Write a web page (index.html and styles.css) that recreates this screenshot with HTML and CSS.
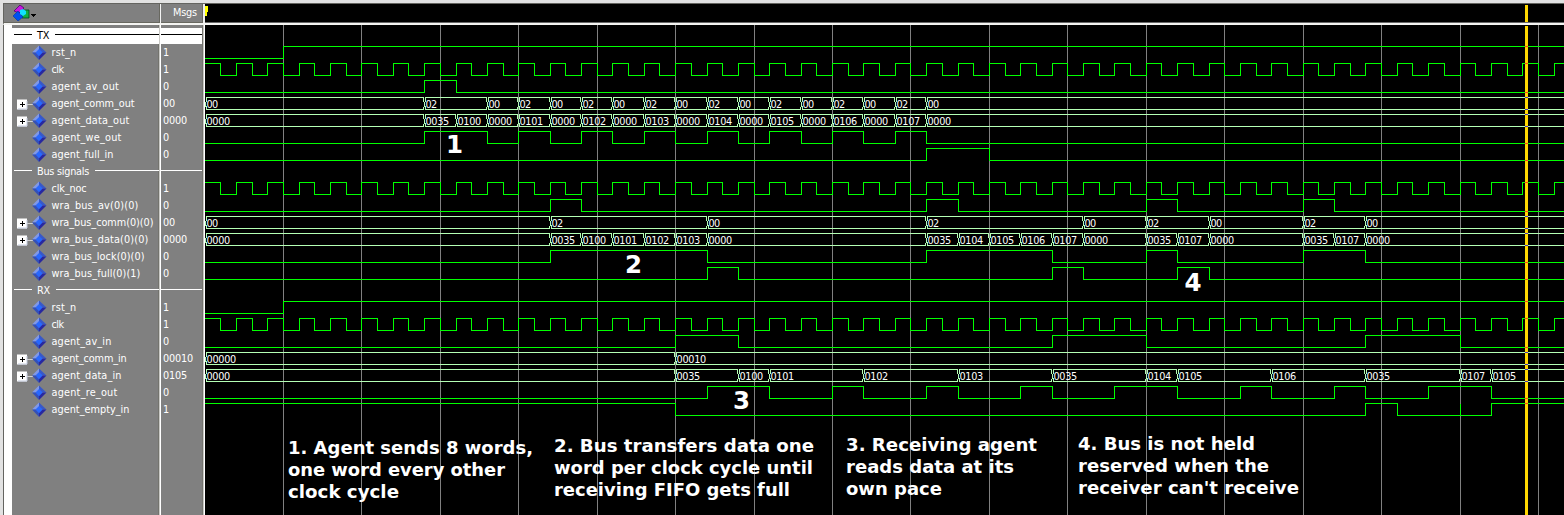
FILE: index.html
```
<!DOCTYPE html>
<html lang="en">
<head>
<meta charset="utf-8">
<title>Wave</title>
<link rel="stylesheet" href="styles.css">
</head>
<body>
<div class="window">
  <div class="header">
    <div class="header-names">
      <svg class="logo" width="26" height="18" viewBox="0 0 26 18">
        <path d="M8 5h8v8H9z" fill="#10b040" stroke="#004820" stroke-width=".8"/>
        <path d="M1 6L7 0l4 3-5 5z" fill="#c818e0" stroke="#500070" stroke-width=".8"/>
        <path d="M0 11l5-5 5 6-5 4z" fill="#0050f0" stroke="#0030a0" stroke-width=".6"/>
        <path d="M7 5l3-1 3 2v3l-3 2-3-2z" fill="#10e0ff"/>
        <path d="M18 9h5v1h-1v1h-1v1h-1v-1h-1v-1h-1z" fill="#000"/>
      </svg>
    </div>
    <div class="header-msgs"><span data-w="24">Msgs</span></div>
    <div class="ruler"><svg width="1359" height="18" shape-rendering="crispEdges">
      <path d="M0 2h3v6H2v4H0z" fill="#ff0"/><rect x="1320" y="1" width="3" height="17" fill="#ffd700"/>
    </svg></div>
  </div>
  <div class="body">
    <div class="names" id="names"></div>
    <div class="values" id="values"></div>
    <div class="waves"><svg id="waves" width="1359" height="490" viewBox="205 25 1359 490"></svg></div>
  </div>
</div>
<script src="wave.js"></script>
</body>
</html>
```
FILE: styles.css
```
* { box-sizing: border-box; }
body { margin: 0; overflow: hidden; background: #000; font-family: "DejaVu Sans Condensed", "DejaVu Sans", sans-serif; font-stretch: condensed; font-size: 10.8px; color: #fff; }
.window { width: 1564px; height: 515px; display: flex; flex-direction: column; border-left: 3px solid #e2e2e2; border-top: 3px solid #e2e2e2; }
.header { display: flex; flex: none; height: 22px; background: #808080; border-top: 1px solid #646460; border-left: 1px solid #646460; border-bottom: 2px solid #f4f4f2; }
.header-names { width: 157px; padding: 1px 0 0 9px; border-right: 1px solid #f4f4f4; box-shadow: inset -1px 0 #686860, inset 0 -1px #686860; }
.logo { display: block; }
.header-msgs { width: 44px; padding: 2px 0 0 12px; border-right: 2px solid #eee; box-shadow: inset -1px 0 #686860, inset 0 -1px #686860; line-height: 14px; white-space: nowrap; }
.ruler { flex: 1; background: #000; border-bottom: 1px solid #686868; }
.ruler svg { display: block; }
.body { display: flex; flex: 1; min-height: 0; border-left: 1px solid #646460; background: #808080; }
.names { width: 157px; padding-top: 2px; border-left: 8px solid #fff; border-right: 1px solid #fff; box-shadow: inset -1px 0 #c8c8c4, inset -2px 0 #74746e; }
.values { width: 44px; padding-top: 2px; border-right: 1px solid #fff; box-shadow: inset -1px 0 #c8c8c4, inset -2px 0 #74746e; }
.row { height: 17px; display: flex; align-items: center; line-height: 17px; white-space: nowrap; }
.names .row { padding-left: 5px; }
.values .row { padding-left: 2px; }
.row .tree { width: 30px; height: 17px; flex: none; display: block; margin-right: 4.5px; }
.names .row.divider { padding: 0 0 0 2px; margin-right: 1px; }
.values .row.divider { padding: 0; margin-right: 2px; }
.divider::before { content: ""; flex: 0 0 18px; height: 1px; margin: 0 5px 2px 0; background: currentColor; }
.divider::after { content: ""; flex: 1; height: 1px; margin: 0 0 2px 6px; background: currentColor; }
.values .divider::before { flex: 1; margin: 0 0 2px; }
.values .divider::after { display: none; }
.selected { background: linear-gradient(#808080 1px, #fff 1px); color: #000; }
.waves { width: 1359px; background: #000; }
.waves svg { display: block; }
.grid { stroke: #808080; fill: none; shape-rendering: crispEdges; }
.bit { stroke: #0f0; fill: none; shape-rendering: crispEdges; }
.bus { stroke: #b4ffb4; fill: none; shape-rendering: crispEdges; }
.value { fill: #fff; font-size: 10.8px; }
.cursor { fill: #ffd700; }
.note, .mark { fill: #fff; font-family: "DejaVu Sans", sans-serif; font-stretch: normal; font-weight: bold; font-size: 17.9px; }
.mark { font-size: 24.5px; }
```
FILE: wave.js
```
const signals = [
  {div: 'TX', w: 12, selected: true},
  {name: 'rst_n', w: 25, v: '1', bit: [5]},
  {name: 'clk', w: 12, v: '1', clock: true},
  {name: 'agent_av_out', w: 67.5, v: '0', bit: [14, 16]},
  {name: 'agent_comm_out', w: 83, v: '00', bus: '0:00 14:02 18:00 20:02 22:00 24:02 26:00 28:02 30:00 32:02 34:00 36:02 38:00 40:02 42:00 44:02 46:00'},
  {name: 'agent_data_out', w: 78, v: '0000', bus: '0:0000 14:0035 16:0100 18:0000 20:0101 22:0000 24:0102 26:0000 28:0103 30:0000 32:0104 34:0000 36:0105 38:0000 40:0106 42:0000 44:0107 46:0000'},
  {name: 'agent_we_out', w: 70, v: '0', bit: [14, 18, 20, 22, 24, 26, 28, 30, 32, 34, 36, 38, 40, 42, 44, 46]},
  {name: 'agent_full_in', w: 62, v: '0', bit: [46, 50]},
  {div: 'Bus signals', w: 52},
  {name: 'clk_noc', w: 35, v: '1', clock: true},
  {name: 'wra_bus_av(0)(0)', w: 87, v: '0', bit: [22, 24, 46, 48, 60, 62, 70, 72]},
  {name: 'wra_bus_comm(0)(0)', w: 102, v: '00', bus: '0:00 22:02 32:00 46:02 56:00 60:02 64:00 70:02 74:00'},
  {name: 'wra_bus_data(0)(0)', w: 97, v: '0000', bus: '0:0000 22:0035 24:0100 26:0101 28:0102 30:0103 32:0000 46:0035 48:0104 50:0105 52:0106 54:0107 56:0000 60:0035 62:0107 64:0000 70:0035 72:0107 74:0000'},
  {name: 'wra_bus_lock(0)(0)', w: 93, v: '0', bit: [22, 32, 46, 54, 60, 62, 70, 74]},
  {name: 'wra_bus_full(0)(1)', w: 89, v: '0', bit: [32, 34, 54, 56, 62, 64]},
  {div: 'RX', w: 13},
  {name: 'rst_n', w: 25, v: '1', bit: [5]},
  {name: 'clk', w: 12, v: '1', clock: true},
  {name: 'agent_av_in', w: 60, v: '0', bit: [30, 34, 54, 60, 74, 80]},
  {name: 'agent_comm_in', w: 75, v: '00010', bus: '0:00000 30:00010'},
  {name: 'agent_data_in', w: 70, v: '0105', bus: '0:0000 30:0035 34:0100 36:0101 42:0102 48:0103 54:0035 60:0104 62:0105 68:0106 74:0035 80:0107 82:0105'},
  {name: 'agent_re_out', w: 66, v: '0', bit: [32, 36, 40, 42, 46, 48, 52, 54, 58, 62, 66, 68, 72, 74, 78, 82]},
  {name: 'agent_empty_in', w: 78, v: '1', bit: [0, 30, 74, 76, 80, 80, 82]}
];

const edge = n => n === 0 ? 205 : Math.round(204.56 + 15.687 * n);
const right = 1564;
let grid = '', waves = '', marks = '';
for (let n = 5; n <= 85; n += 5) grid += `M${edge(n) + .5} 25V515`;

const tree = expandable => `<svg class="tree" viewBox="0 0 30 17">
  ${expandable ? '<path d="M10 9.5H16" stroke="#d0d0d0"/><rect y="4.5" width="10" height="10" fill="#fff"/><path d="M1 14H10V6" stroke="#c4cce0" fill="none"/><path d="M2.5 9.5h5M5 7v5" stroke="#000" shape-rendering="crispEdges"/>' : ''}
  <path d="M15 8.5L22 1.5 22 8.5z" fill="#8098e8"/><path d="M22 1.5L29.5 8.5H22z" fill="#3858c8"/>
  <path d="M15 8.5L22 16V8.5z" fill="#3450b8"/><path d="M22 16L29.5 8.5H22z" fill="#2828a0"/>
  <path d="M18.5 8.5L22 5l3.7 3.5L22 12.2z" fill="#2868ff"/></svg>`;

let names = '', values = '';
signals.forEach((s, i) => {
  const hi = 29.5 + 17 * i, lo = hi + 12;
  if (s.div) {
    const cls = 'row divider' + (s.selected ? ' selected' : '');
    names += `<div class="${cls}"><span data-w="${s.w}">${s.div}</span></div>`;
    values += `<div class="${cls}"></div>`;
    return;
  }
  names += `<div class="row">${tree(!!s.bus)}<span data-w="${s.w}">${s.name}</span></div>`;
  values += `<div class="row"><span data-w="${s.v.length * 6}">${s.v}</span></div>`;
  if (s.bus) {
    const items = s.bus.split(' ').map(t => t.split(':'));
    let d = '', text = '';
    items.forEach(([n, label], k) => {
      const x = edge(+n), e = k + 1 < items.length ? edge(+items[k + 1][0]) : right;
      d += `M${x + 1} ${hi}H${e}M${x + 1} ${lo}H${e}`;
      d += `M${x + 1.5} ${hi}V${hi + 4}M${x + .5} ${hi + 4}V${lo - 3}M${x + 1.5} ${lo - 4}V${lo}`;
      if (k) d += `M${x - .5} ${hi}V${hi + 4}M${x - .5} ${lo - 3}V${lo}`;
      text += `<text class="value" x="${x + 1.5}" y="${hi + 10.5}" textLength="${label.length * 6 - .3}">${label}</text>`;
    });
    waves += `<path class="bus" d="${d}"/>${text}`;
    marks += `<path d="M1525 ${hi}h3M1525 ${lo}h3" stroke="#4830c0" shape-rendering="crispEdges"/>`;
  } else {
    const flips = s.clock ? Array.from({length: 87}, (_, n) => n) : s.bit;
    let level = 0, d = flips[0] === 0 ? '' : `M205 ${lo}`;
    flips.forEach(n => {
      level ^= 1;
      d += n === 0 ? `M205 ${hi}` : `H${edge(n) + .5}V${level ? hi : lo}`;
    });
    waves += `<path class="bit" d="${d}H${right}"/>`;
    marks += `<path d="M1525 ${level || s.clock ? hi : lo}h3" stroke="#ff3820" shape-rendering="crispEdges"/>`;
  }
});

const notes = [
  [288, 454, [['1. Agent sends 8 words,', 245], ['one word every other', 217], ['clock cycle', 111]]],
  [554, 452, [['2. Bus transfers data one', 260], ['word per clock cycle until', 259], ['receiving FIFO gets full', 236]]],
  [846, 451, [['3. Receiving agent', 191], ['reads data at its', 168], ['own pace', 96]]],
  [1078, 450, [['4. Bus is not held', 177], ['reserved when the', 191], ["receiver can't receive", 221]]]
].map(([x, y, lines]) => lines.map(([t, w], k) =>
  `<text class="note" x="${x}" y="${y + 22 * k}" textLength="${w}" lengthAdjust="spacingAndGlyphs">${t}</text>`).join('')).join('');
const numbers = [[1, 446, 153], [2, 625, 273], [3, 733, 409], [4, 1184.5, 291]]
  .map(([t, x, y]) => `<text class="mark" x="${x}" y="${y}">${t}</text>`).join('');

document.getElementById('names').innerHTML = names;
document.getElementById('values').innerHTML = values;
document.getElementById('waves').innerHTML = `<path class="grid" d="${grid}"/>${waves}` +
  `<rect class="cursor" x="1525" y="26" width="3" height="489"/>${marks}${notes}${numbers}`;
document.querySelectorAll('[data-w]').forEach(el => {
  const natural = el.getBoundingClientRect().width;
  el.style.letterSpacing = (el.dataset.w - natural) / el.textContent.length + 'px';
});
```
